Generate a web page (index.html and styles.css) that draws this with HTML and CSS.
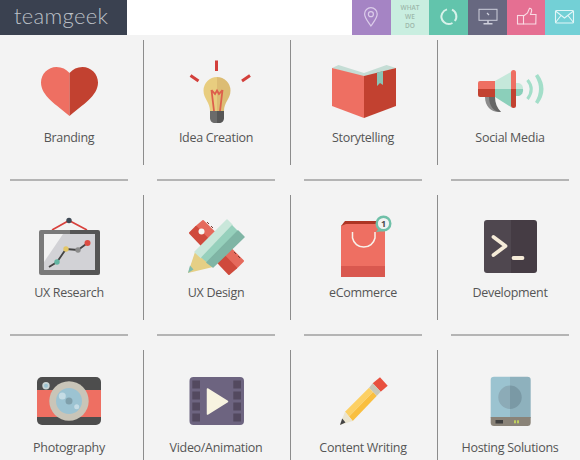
FILE: index.html
```html
<!DOCTYPE html>
<html lang="en">
<head>
    <meta charset="UTF-8">
    <title>teamgeek - What we do</title>
    <link rel="stylesheet" href="styles.css">
</head>
<body>
    <div class="page">
        <header class="header">
            <div class="logo">teamgeek</div>
            <nav class="nav">
                <a class="tile tile-purple">
                    <svg viewBox="0 0 38 35" width="38" height="35" fill="none" stroke="#dccdea" stroke-width="1.2"><path d="M18.9 26 C16 21.500 12.600 18 12.600 14 A6.300 6.300 0 0 1 25.200 14 C25.200 18 22 21.500 18.900 26Z"/><circle cx="18.900" cy="14.200" r="2.500"/></svg>
                </a>
                <a class="tile tile-mint tile-text">WHAT<br>WE<br>DO</a>
                <a class="tile tile-teal">
                    <svg viewBox="0 0 38 35" width="38" height="35" fill="none" stroke="#d8f2ea" stroke-width="2"><path d="M23 9.700 A7.400 7.400 0 0 1 25.800 21"/><path d="M23.500 23 A7.400 7.400 0 0 1 13.200 13.400 A7.400 7.400 0 0 1 18 9.400"/></svg>
                </a>
                <a class="tile tile-slate">
                    <svg viewBox="0 0 38 35" width="38" height="35" fill="none" stroke="#cfd0dc" stroke-width="1"><rect x="11" y="9.300" width="18" height="11"/><path d="M20 20.500v3M15.500 23.800h9" stroke-width="1.500"/><path d="M19 13l2 2" stroke-width="1.200"/></svg>
                </a>
                <a class="tile tile-pink">
                    <svg viewBox="0 0 38 35" width="38" height="35" fill="none" stroke="#f9dbe4" stroke-width="1.100"><rect x="10.500" y="15.500" width="6" height="8.500"/><path d="M16.500 16 L20.500 13 L22.500 8.300 C24.500 8.300 25 10 24.500 11.500 L23.500 14.500 L29 14.500 L28.800 24 L16.500 24"/></svg>
                </a>
                <a class="tile tile-cyan">
                    <svg viewBox="0 0 38 35" width="38" height="35" fill="none" stroke="#e2f6f7" stroke-width="1.100"><rect x="10.500" y="10.500" width="18" height="12.500" rx="1"/><path d="M10.500 11 L19.500 18 L28.500 11M10.500 22.500 L16 15.500M28.500 22.500 L23 15.500"/></svg>
                </a>
            </nav>
        </header>

        <main class="grid">
            <div class="cell">
                <div class="cell-body">
                    <svg class="icon" viewBox="0 0 100 80" width="100" height="80">
                        <path fill="#ee6f62" d="M50.500 23 C47 19 43 17 37.500 17 C29 17 22 24 22 32.500 C22 46 38 55 50.500 66Z"/>
                        <path fill="#c24130" d="M50.500 23 C54 19 58 17 63.500 17 C72 17 79 24 79 32.500 C79 46 63 55 50.500 66Z"/>
                    </svg>
                    <div class="label">Branding</div>
                </div>
                <div class="rule"></div>
            </div>
            <div class="cell">
                <div class="cell-body">
                    <svg class="icon" viewBox="0 0 100 80" width="100" height="80">
                        <path stroke="#d33f3b" stroke-width="3" d="M50.500 10.500V21M24.500 25.500L32.500 31M76 31L84 25.500"/>
                        <path fill="#e8cd7f" d="M51 27 A13.500 13.500 0 0 0 37.500 40.500 C37.500 49 44 52 44 61 H51Z"/>
                        <path fill="#dcbc73" d="M51 27 A13.500 13.500 0 0 1 64.500 40.500 C64.500 49 58 52 58 61 H51Z"/>
                        <path fill="none" stroke="#dd5f4c" stroke-width="1.800" d="M45.500 40 L48 61 M56.500 40 L54 61 M45.500 40 L49 44 L51 40.500 L53 44 L56.500 40"/>
                        <path fill="#6b6b6b" d="M44 61 H51 V73 H49 C46 73 44 71 44 68Z"/>
                        <path fill="#565656" d="M58 61 H51 V73 H53 C56 73 58 71 58 68Z"/>
                    </svg>
                    <div class="label">Idea Creation</div>
                </div>
                <div class="rule"></div>
            </div>
            <div class="cell">
                <div class="cell-body">
                    <svg class="icon" viewBox="0 0 100 80" width="100" height="80">
                        <path fill="#c5ddd5" d="M19 18 L25.500 15 L51 23 L73.500 15 L83 18 L51 28Z"/>
                        <path fill="#ee6f62" d="M19 18 L51 26 V68 L19 56Z"/>
                        <path fill="#c24130" d="M51 26 L83 18 V56 L51 68Z"/>
                        <path fill="#8ac4b5" d="M64 22.500 L70 21 V35 L67 33 L64 36Z"/>
                    </svg>
                    <div class="label">Storytelling</div>
                </div>
                <div class="rule"></div>
            </div>
            <div class="cell">
                <div class="cell-body">
                    <svg class="icon" viewBox="0 0 100 80" width="100" height="80">
                        <path fill="#8b8b8b" d="M25 47 H33 C33 54 36 59 41 62 C32 63 25 57 25 47Z"/>
                        <path fill="#666" d="M29 47 H35 C35 53 37 58 41 62 C34 62 29 56 29 47Z"/>
                        <path fill="#ee6f62" d="M20 31 H35 V39 H18 V33 Q18 31 20 31Z"/>
                        <path fill="#c24130" d="M18 39 H35 V47 H20 Q18 47 18 45Z"/>
                        <path fill="#c5e8da" d="M35 31 L51 22 V39 H35Z"/>
                        <path fill="#8bcfba" d="M35 39 H51 V57 L35 47Z"/>
                        <path fill="#c5e8da" d="M56 33 H59 A6 6 0 0 1 63 39 H56Z"/>
                        <path fill="#8bcfba" d="M56 39 H63 A6 6 0 0 1 59 46 H56Z"/>
                        <path fill="#ee6f62" d="M51 22.500 A2.500 2.500 0 0 1 56 22.500 V39 H51Z"/>
                        <path fill="#c24130" d="M51 39 H56 V55.500 A2.500 2.500 0 0 1 51 55.500Z"/>
                        <path fill="none" stroke="#a3dec9" stroke-width="3" d="M67.500 30 Q75 39 67.500 49"/>
                        <path fill="#a3dec9" d="M75 26 L78 24 Q89 39 78 54 L75 52 Q83 39 75 26Z"/>
                    </svg>
                    <div class="label">Social Media</div>
                </div>
                <div class="rule"></div>
            </div>

            <div class="cell">
                <div class="cell-body">
                    <svg class="icon" viewBox="0 0 100 80" width="100" height="80">
                        <path fill="none" stroke="#d8403c" stroke-width="1.600" d="M33 25 L50 15.500 L68 25"/>
                        <circle cx="50" cy="15.500" r="2.700" fill="#3f4a55"/>
                        <path fill="#7a7a7a" d="M22 25 H51 V70 H22 Q20 70 20 68 V27 Q20 25 22 25Z"/>
                        <path fill="#555" d="M51 25 H79 Q81 25 81 27 V68 Q81 70 79 70 H51Z"/>
                        <rect x="25" y="29" width="51" height="36" fill="#d2d2d6"/>
                        <path fill="#f2f2f2" d="M25 29 H44 L25 57Z"/>
                        <path fill="none" stroke="#444" stroke-width="1.800" d="M30 62 L38 57 L47 44 L59 45 L68.500 38"/>
                        <circle cx="38" cy="57" r="2.700" fill="#62b5a2"/>
                        <circle cx="47" cy="44" r="2.700" fill="#e3c666"/>
                        <circle cx="59" cy="45" r="2.700" fill="#8a8a8a"/>
                        <circle cx="68.500" cy="38" r="3" fill="#dc4c42"/>
                    </svg>
                    <div class="label">UX Research</div>
                </div>
                <div class="rule"></div>
            </div>
            <div class="cell">
                <div class="cell-body">
                    <svg class="icon" viewBox="0 0 100 80" width="100" height="80">
                        <path fill="#e56a5c" stroke="#e56a5c" stroke-width="2" stroke-linejoin="round" d="M37 16 L77 56 L70 63 L30 22Z"/>
                        <path fill="#cf4a3c" stroke="#cf4a3c" stroke-width="2" stroke-linejoin="round" d="M24 28 L30 22 L70 63 L63 69Z"/>
                        <circle cx="35.500" cy="26.500" r="3" fill="#f6f6f2"/>
                        <path stroke="#7a3a32" stroke-width="1" d="M41 17l2 2M45 21l2 2M68 47l2 2M72 51l2 2"/>
                        <path fill="#e5cf85" d="M29 47 L47 62 L22 68Z"/>
                        <path fill="#7fbcae" d="M24 60.500 L27.500 64.500 L22 68Z"/>
                        <path fill="#c9e7da" stroke="#c9e7da" stroke-width="1.500" stroke-linejoin="round" d="M29 47 L61 15 L66 20 L35 52.500Z"/>
                        <path fill="#96d0bc" d="M35 52.500 L66 20 L72 26 L41 57.500Z"/>
                        <path fill="#7fb5a5" stroke="#7fb5a5" stroke-width="1.500" stroke-linejoin="round" d="M41 57.500 L72 26 L78 32 L47 62Z"/>
                    </svg>
                    <div class="label">UX Design</div>
                </div>
                <div class="rule"></div>
            </div>
            <div class="cell">
                <div class="cell-body">
                    <svg class="icon" viewBox="0 0 100 80" width="100" height="80">
                        <path fill="#ad3524" d="M32 16 H67 L72 21 H28Z"/>
                        <path fill="#ee6f62" d="M28 21 L33 19 H68 L72 21 V61 H28Z"/>
                        <rect x="28" y="61" width="44" height="11" fill="#d9584f"/>
                        <path fill="none" stroke="#f8f2ea" stroke-width="1.500" d="M39.500 27 V33 A11.500 11.500 0 0 0 62 33 V27"/>
                        <path fill="#6fc0a8" d="M68 21 L63 27 L72 26Z"/>
                        <circle cx="70.500" cy="18.500" r="6.800" fill="#f2f2f2" stroke="#6fc0a8" stroke-width="2.400"/>
                        <text class="badge-num" x="70.500" y="22" text-anchor="middle">1</text>
                    </svg>
                    <div class="label">eCommerce</div>
                </div>
                <div class="rule"></div>
            </div>
            <div class="cell">
                <div class="cell-body">
                    <svg class="icon" viewBox="0 0 100 80" width="100" height="80">
                        <path fill="#4f474f" d="M27 15 H51 V68 H27 Q24 68 24 65 V18 Q24 15 27 15Z"/>
                        <path fill="#453c44" d="M51 15 H74 Q77 15 77 18 V65 Q77 68 74 68 H51Z"/>
                        <path fill="none" stroke="#f5ebd8" stroke-width="3.800" stroke-linecap="round" stroke-linejoin="round" d="M33.500 32 L45.500 41 L33.500 50"/>
                        <path fill="none" stroke="#f5ebd8" stroke-width="3.800" stroke-linecap="round" d="M53.500 53 H62.500"/>
                    </svg>
                    <div class="label">Development</div>
                </div>
                <div class="rule"></div>
            </div>

            <div class="cell">
                <div class="cell-body">
                    <svg class="icon" viewBox="0 0 100 80" width="100" height="80">
                        <rect x="18" y="17" width="64" height="48" rx="5" fill="#4d4d4d"/>
                        <rect x="18" y="30" width="64" height="27" fill="#ee6f62"/>
                        <circle cx="27" cy="25.700" r="3.700" fill="#c9d5d5"/>
                        <circle cx="27" cy="25.700" r="2" fill="#9cc3d2"/>
                        <circle cx="50" cy="41" r="19.700" fill="#c9c5b8"/>
                        <circle cx="50" cy="41" r="13" fill="#9cc3d2"/>
                        <circle cx="50" cy="41" r="3.500" fill="#7f9fab"/>
                        <circle cx="43.300" cy="36" r="3.500" fill="#c5dce5"/>
                        <circle cx="57.700" cy="46.700" r="2.500" fill="#c5dce5"/>
                    </svg>
                    <div class="label">Photography</div>
                </div>
                <div class="rule"></div>
            </div>
            <div class="cell">
                <div class="cell-body">
                    <svg class="icon" viewBox="0 0 100 80" width="100" height="80">
                        <rect x="23.500" y="17" width="54.500" height="48" rx="4" fill="#6d6480"/>
                        <g fill="#53495f">
                            <rect x="26.300" y="20.500" width="7.700" height="8"/>
                            <rect x="26.300" y="31.500" width="7.700" height="8"/>
                            <rect x="26.300" y="42.500" width="7.700" height="8"/>
                            <rect x="26.300" y="53.500" width="7.700" height="8"/>
                            <rect x="67.300" y="20.500" width="7.700" height="8"/>
                            <rect x="67.300" y="31.500" width="7.700" height="8"/>
                            <rect x="67.300" y="42.500" width="7.700" height="8"/>
                            <rect x="67.300" y="53.500" width="7.700" height="8"/>
                        </g>
                        <path fill="#f7f3e0" stroke="#f7f3e0" stroke-width="1.500" stroke-linejoin="round" d="M41.500 29 L61.500 41.500 L41.500 54Z"/>
                    </svg>
                    <div class="label">Video/Animation</div>
                </div>
                <div class="rule"></div>
            </div>
            <div class="cell">
                <div class="cell-body">
                    <svg class="icon" viewBox="0 0 100 80" width="100" height="80">
                        <path fill="#e8503f" d="M67 17.300 L74.700 25.700 L67.700 31.700 L59.700 23.300Z"/>
                        <path fill="#c8c8b8" d="M59.700 23.300 L67.700 31.700 L63.700 36 L56 27.700Z"/>
                        <path fill="#fcd064" d="M56 27.700 L60 32 L36 56.500 L32 51.700Z"/>
                        <path fill="#f9bf3f" d="M60 32 L63.700 36 L39.700 61 L36 56.500Z"/>
                        <path fill="#ebe5d0" d="M32 51.700 L39.700 61 L27 65Z"/>
                        <path fill="#444" d="M29.200 58.500 L32.500 62.500 L27 65Z"/>
                    </svg>
                    <div class="label">Content Writing</div>
                </div>
                <div class="rule"></div>
            </div>
            <div class="cell">
                <div class="cell-body">
                    <svg class="icon" viewBox="0 0 100 80" width="100" height="80">
                        <path fill="#9bc3d0" d="M34 16.700 H50 V58 H30.700 V20 Q30.700 16.700 34 16.700Z"/>
                        <path fill="#8eb1bd" d="M50 16.700 H67.400 Q70.700 16.700 70.700 20 V58 H50Z"/>
                        <path fill="#8cabb7" d="M50 25.600 A11.700 11.700 0 0 0 50 49Z"/>
                        <path fill="#7a99a5" d="M50 25.600 A11.700 11.700 0 0 1 50 49Z"/>
                        <path fill="#8a8378" d="M30.700 57 H70.700 V62.500 Q70.700 66 67.400 66 H34 Q30.700 66 30.700 62.500Z"/>
                        <rect x="35.500" y="60" width="7.500" height="3.500" fill="#3f3f3f"/>
                        <rect x="54" y="60.300" width="2" height="3" fill="#c0d060"/>
                        <rect x="57" y="60.300" width="2" height="3" fill="#c0d060"/>
                    </svg>
                    <div class="label">Hosting Solutions</div>
                </div>
                <div class="rule"></div>
            </div>
        </main>
    </div>
</body>
</html>
```

FILE: styles.css
```css
html, body {
    margin: 0;
    padding: 0;
    height: 460px;
    overflow: hidden;
    background: #f3f3f3;
}
body {
    font-family: "Open Sans", Arial, sans-serif;
    color: #555;
}
.page {
    width: 580px;
    height: 460px;
    overflow: hidden;
}
.header {
    display: flex;
    justify-content: space-between;
    width: 584px;
    height: 35px;
    background: #fff;
}
.logo {
    width: 127px;
    padding-left: 14px;
    box-sizing: border-box;
    background: #3a4150;
    color: #bcc0c7;
    font-family: Lato, sans-serif;
    font-weight: 300;
    font-size: 22px;
    letter-spacing: 0.3px;
    line-height: 32px;
}
.nav {
    display: flex;
    width: 232px;
}
.tile {
    flex: 1;
    display: block;
}
.tile svg {
    display: block;
}
.tile-purple { background: #a584c4; }
.tile-mint { background: #c9eee0; }
.tile-teal { background: #62c4ac; }
.tile-slate { background: #676880; }
.tile-pink { background: #e56f92; }
.tile-cyan { background: #73d0d6; }
.tile-text {
    padding-top: 3px;
    box-sizing: border-box;
    color: #9db8ab;
    font-size: 6.5px;
    font-weight: 600;
    line-height: 9px;
    text-align: center;
}
.grid {
    display: grid;
    grid-template-columns: repeat(4, 147px);
    margin-left: -3px;
    padding-top: 5px;
}
.cell {
    height: 155px;
}
.cell-body {
    height: 125px;
    padding: 10px 2px 0 0;
    box-sizing: border-box;
    border-right: 1px solid #8c8c8c;
}
.icon {
    display: block;
    margin: 0 auto;
}
.label {
    font-size: 12.5px;
    letter-spacing: -0.3px;
    line-height: 16px;
    text-align: center;
}
.rule {
    width: 118px;
    height: 2px;
    margin: 14px 0 0 13px;
    background: #b4b4b4;
}
.badge-num {
    font-family: "Open Sans", sans-serif;
    font-size: 9px;
    font-weight: 700;
    fill: #4a4a4a;
}
```
